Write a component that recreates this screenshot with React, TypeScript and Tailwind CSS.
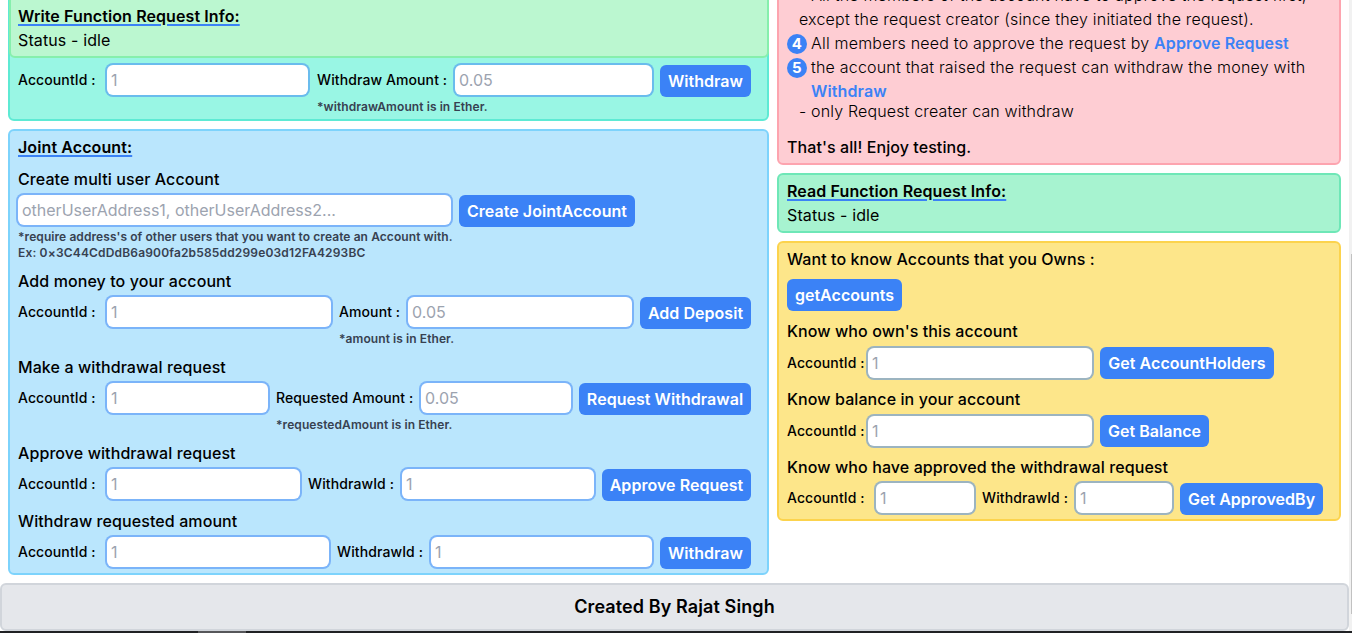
import React from "react";

type FieldProps = { label: string; placeholder: string; labelClass: string; inputClass: string };

function Input({ placeholder, className }: { placeholder: string; className: string }) {
  return (
    <input
      type="text"
      placeholder={placeholder}
      className={`h-[30px] shrink-0 rounded-md bg-white px-1 ring-2 ring-[#3b82f6]/50 outline-none placeholder:text-[#9ca3af] ${className}`}
    />
  );
}

function Field({ label, placeholder, labelClass, inputClass }: FieldProps) {
  return (
    <>
      <label className={`shrink-0 text-sm leading-[30px] font-medium tracking-[0.1px] whitespace-nowrap ${labelClass}`}>{label}</label>
      <Input placeholder={placeholder} className={inputClass} />
    </>
  );
}

function Button({ children, className = "" }: { children: React.ReactNode; className?: string }) {
  return (
    <button className={`h-8 shrink-0 rounded-md bg-[#3b82f6] text-center font-semibold tracking-[0.04px] whitespace-nowrap text-white ${className}`}>
      {children}
    </button>
  );
}

function Note({ children, className = "" }: { children: React.ReactNode; className?: string }) {
  return <p className={`mt-0.5 text-xs leading-4 font-semibold tracking-[0.08px] text-[#374151] ${className}`}>{children}</p>;
}

function Title({ children }: { children: React.ReactNode }) {
  return (
    <h2 className="font-semibold tracking-[0.1px] underline decoration-[#3b82f6] decoration-2 underline-offset-2">{children}</h2>
  );
}

function Heading({ children, className = "mt-2" }: { children: React.ReactNode; className?: string }) {
  return <h3 className={`font-medium tracking-[0.09px] ${className}`}>{children}</h3>;
}

function Row({ children }: { children: React.ReactNode }) {
  return <div className="mt-1 flex h-8 items-start">{children}</div>;
}

function Step({ n, children }: { n: number; children: React.ReactNode }) {
  return (
    <li className="flex items-start gap-1">
      <span className="mt-[3px] flex size-5 shrink-0 items-center justify-center rounded-full bg-[#3b82f6] text-[15px] leading-5 font-bold text-white">
        {n}
      </span>
      <span>{children}</span>
    </li>
  );
}

function LeftColumn() {
  return (
    <div className="flex w-[761px] flex-col gap-2">
      <section className="-mt-2 h-[129px] rounded-md border-2 border-[#5eead4] bg-[#99f6e4]">
        <div className="-mr-0.5 -ml-px h-16 rounded-md border-2 border-[#86efac] bg-[#bbf7d0] pt-2 pl-[7px]">
          <Title>Write Function Request Info:</Title>
          <p className="tracking-[0.12px]">Status - idle</p>
        </div>
        <div className="px-2 pt-[3px]">
          <Row>
            <Field label="AccountId :" placeholder="1" labelClass="w-[89px]" inputClass="w-[201px]" />
            <Field label="Withdraw Amount :" placeholder="0.05" labelClass="ml-[9px] w-[138px]" inputClass="w-[197px]" />
            <Button className="ml-2 w-[91px]">Withdraw</Button>
          </Row>
          <Note className="pl-[299px]">*withdrawAmount is in Ether.</Note>
        </div>
      </section>

      <section className="h-[446px] rounded-md border-2 border-[#7dd3fc] bg-[#bae6fd] px-2 py-1">
        <Title>Joint Account:</Title>
        <Heading>Create multi user Account</Heading>
        <Row>
          <Input placeholder="otherUserAddress1, otherUserAddress2..." className="w-[433px]" />
          <Button className="ml-2 w-[176px]">Create JointAccount</Button>
        </Row>
        <Note>
          *require address's of other users that you want to create an Account with.
          <br />
          <span className="tracking-[0.17px]">Ex: 0×3C44CdDdB6a900fa2b585dd299e03d12FA4293BC</span>
        </Note>

        <Heading>Add money to your account</Heading>
        <Row>
          <Field label="AccountId :" placeholder="1" labelClass="w-[89px]" inputClass="w-[224px]" />
          <Field label="Amount :" placeholder="0.05" labelClass="ml-2 w-[69px]" inputClass="w-[224px]" />
          <Button className="ml-2 w-[111px]">Add Deposit</Button>
        </Row>
        <Note className="pl-[321px]">*amount is in Ether.</Note>

        <Heading>Make a withdrawal request</Heading>
        <Row>
          <Field label="AccountId :" placeholder="1" labelClass="w-[89px]" inputClass="w-[161px]" />
          <Field label="Requested Amount :" placeholder="0.05" labelClass="ml-2 w-[145px]" inputClass="w-[150px]" />
          <Button className="ml-2 w-[172px]">Request Withdrawal</Button>
        </Row>
        <Note className="pl-[258px]">*requestedAmount is in Ether.</Note>

        <Heading>Approve withdrawal request</Heading>
        <Row>
          <Field label="AccountId :" placeholder="1" labelClass="w-[89px]" inputClass="w-[193px]" />
          <Field label="WithdrawId :" placeholder="1" labelClass="ml-2 w-[94px]" inputClass="w-[192px]" />
          <Button className="ml-2 w-[149px]">Approve Request</Button>
        </Row>

        <Heading>Withdraw requested amount</Heading>
        <Row>
          <Field label="AccountId :" placeholder="1" labelClass="w-[89px]" inputClass="w-[222px]" />
          <Field label="WithdrawId :" placeholder="1" labelClass="ml-2 w-[94px]" inputClass="w-[221px]" />
          <Button className="ml-2 w-[91px]">Withdraw</Button>
        </Row>
      </section>
    </div>
  );
}

function RightColumn() {
  return (
    <div className="flex w-[564px] flex-col gap-2">
      <section className="-mt-[22px] h-[187px] rounded-md border-2 border-[#fda4af] bg-[#fecdd3] px-2 pt-1">
        <ul className="font-light tracking-[0.2px]">
          <li className="-mt-px pl-3">
            - All the members of the account have to approve the request first,
            <br />
            except the request creator (since they initiated the request).
          </li>
          <Step n={4}>
            All members need to approve the request by{" "}
            <b className="font-semibold tracking-[0.12px] text-[#3b82f6]">Approve Request</b>
          </Step>
          <Step n={5}>
            the account that raised the request can withdraw the money with{" "}
            <b className="font-semibold tracking-[0.12px] text-[#3b82f6]">Withdraw</b>
          </Step>
          <li className="-mt-1 pl-3 tracking-[0.15px]">- only Request creater can withdraw</li>
        </ul>
        <p className="mt-3 font-medium tracking-[0.08px]">That's all! Enjoy testing.</p>
      </section>

      <section className="h-[60px] rounded-md border-2 border-[#6ee7b7] bg-[#a7f3d0] px-2 py-1">
        <Title>Read Function Request Info:</Title>
        <p className="tracking-[0.12px]">Status - idle</p>
      </section>

      <section className="h-[280px] rounded-md border-2 border-[#fcd34d] bg-[#fde68a] px-2 py-1">
        <Heading className="mt-0">Want to know Accounts that you Owns :</Heading>
        <Button className="mt-2 block w-[115px]">getAccounts</Button>
        <Heading>Know who own's this account</Heading>
        <div className="mt-1 flex h-8 items-center">
          <Field label="AccountId :" placeholder="1" labelClass="w-[81px]" inputClass="w-[224px]" />
          <Button className="ml-2 w-[174px]">Get AccountHolders</Button>
        </div>
        <Heading>Know balance in your account</Heading>
        <div className="mt-1 flex h-8 items-center">
          <Field label="AccountId :" placeholder="1" labelClass="w-[81px]" inputClass="w-[224px]" />
          <Button className="ml-2 w-[109px]">Get Balance</Button>
        </div>
        <Heading>Know who have approved the withdrawal request</Heading>
        <Row>
          <Field label="AccountId :" placeholder="1" labelClass="w-[89px]" inputClass="w-[98px]" />
          <Field label="WithdrawId :" placeholder="1" labelClass="ml-2 w-[94px]" inputClass="w-[96px]" />
          <Button className="ml-2 w-[143px]">Get ApprovedBy</Button>
        </Row>
      </section>
    </div>
  );
}

export default function App() {
  return (
    <div className="flex h-[633px] w-[1352px] flex-col overflow-hidden bg-white font-['Inter',sans-serif] text-base text-black">
      <div className="flex h-[631px] w-full">
        <div className="flex w-[1349px] flex-col">
          <main className="flex h-[583px] items-start gap-2 pl-2">
            <LeftColumn />
            <RightColumn />
          </main>
          <footer className="flex h-12 items-center justify-center rounded-md border-2 border-[#d1d5db] bg-[#e5e7eb] text-lg font-semibold tracking-[0.1px]">
            Created By Rajat Singh
          </footer>
        </div>
        <div className="w-[3px] bg-[#f1f1f1] pt-[254px] pl-0.5">
          <div className="h-[360px] bg-[#c1c1c1]" />
        </div>
      </div>
      <div className="h-0.5 bg-[#202124] pl-[198px]">
        <div className="h-0.5 w-12 bg-[#56575a]" />
      </div>
    </div>
  );
}
